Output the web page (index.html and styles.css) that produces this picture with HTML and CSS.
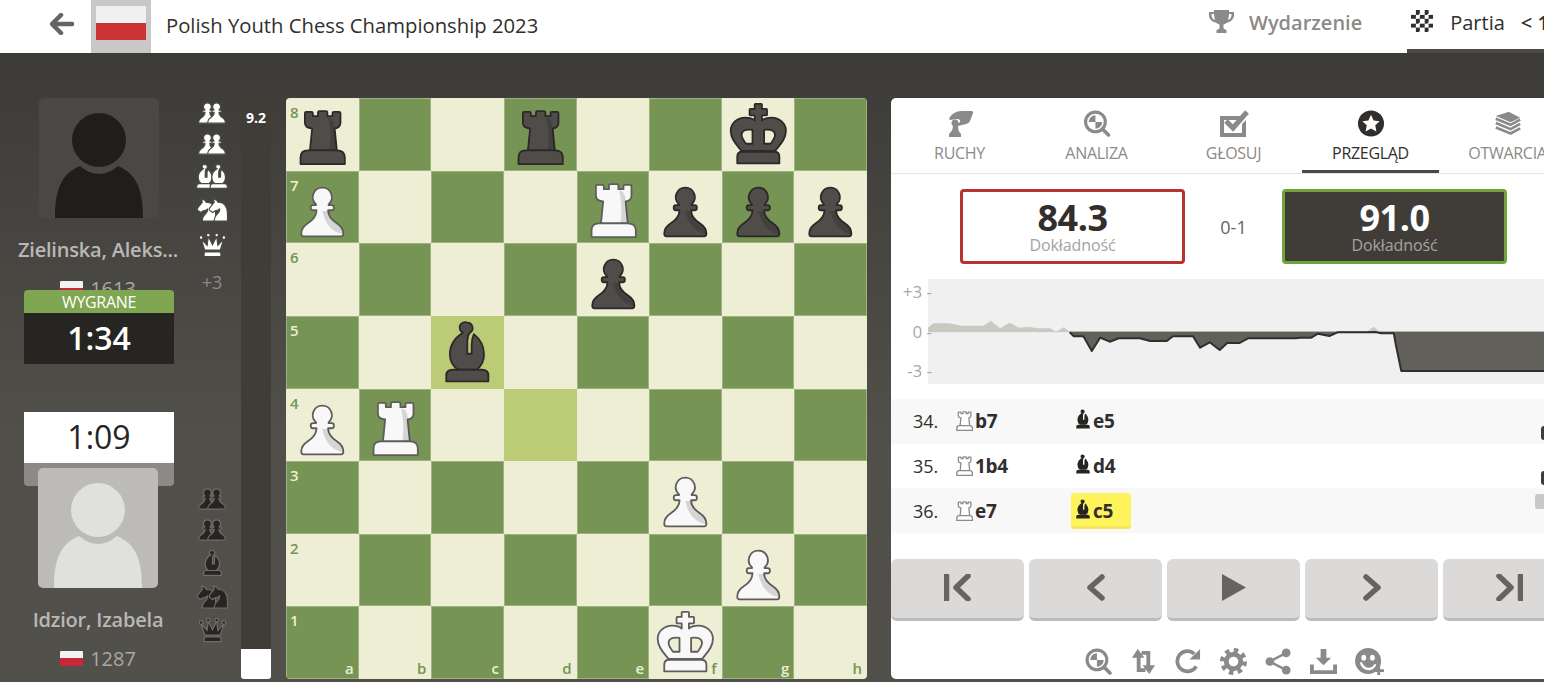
FILE: index.html
```html
<!DOCTYPE html>
<html lang="pl">
<head>
  <meta charset="UTF-8">
  <meta name="viewport" content="width=device-width, initial-scale=1.0">
  <title>Polish Youth Chess Championship 2023</title>
  <link rel="stylesheet" href="styles.css">
</head>
<body>

<!-- Shared piece shapes -->
<svg class="defs" aria-hidden="true">
  <symbol id="rook" viewBox="0 0 100 100">
    <path d="M26 21q0-2 2-2h7q2 0 2 2v4h7v-5q0-2 2-2h9q2 0 2 2v5h7v-4q0-2 2-2h7q2 0 2 2v13q0 7-8 8l3 30H33l3-30q-10-1-10-8z"/>
    <path class="shade" d="M58 27q9 0 9 15l3 30H60q3-25-2-45z"/>
    <path d="M30 72h40q11 0 11 10v9H20v-9q0-10 10-10z"/>
  </symbol>
  <symbol id="pawn" viewBox="0 0 100 100">
    <path d="M50 23a13 13 0 0 1 9 22.500q-1 1 0 1.500h4q3 0 3 3.500t-3 3.500h-5q0 10 12 18q9 6 9 14 0 4-3 4H24q-3 0-3-4 0-8 9-14q12-8 12-18h-5q-3 0-3-3.500t3-3.500h4q1-.5 0-1.500A13 13 0 0 1 50 23z"/>
    <path class="shade" d="M50 55h8q0 10 12 18q9 6 9 14-14-2-22-14-5-8-7-18z"/>
  </symbol>
  <symbol id="bishop" viewBox="0 0 100 100">
    <path d="M50 9a7.500 7.500 0 0 1 3.500 14Q50 27 50 34V52h6V40q0-8 3-15q14 11 14 28q0 13-10 21H37Q26 66 26 53q0-19 18-30a7.500 7.500 0 0 1 6-14z"/>
    <path d="M30 74h40q9 0 9 8v8H21v-8q0-8 9-8z"/>
  </symbol>
  <symbol id="king" viewBox="0 0 100 100">
    <path fill-rule="evenodd" d="M45 9q0-1 1-1h8q1 0 1 1v6h6q1 0 1 1v7q0 1-1 1h-6v7q4-4 13-4c11 0 20 8 20 18c0 12-9 20-15 28H27C21 65 12 57 12 45c0-10 9-18 20-18q9 0 13 4v-7h-6q-1 0-1-1v-7q0-1 1-1h6zM42 44v19H33q-6-8-6-12 0-9 15-7zM58 44v19h9q6-8 6-12 0-9-15-7z"/>
    <path d="M28 74h44q7 0 7 7v9H21v-9q0-7 7-7z"/>
  </symbol>
  <symbol id="knight" viewBox="0 0 100 100">
    <path d="M45 15l6 8c20-2 33 14 33 40v27H36c0-14 5-20 14-28 4-4 7-9 6-16-6 6-12 7-17 7l-8 6-11-7c-3-3-2-6 0-10l16-20-2-12z"/>
  </symbol>
  <symbol id="queen" viewBox="0 0 100 100">
    <path d="M24 68L12 30l20 22 4-30 14 28 14-28 4 30 20-22-12 38z"/>
    <circle cx="12" cy="26" r="6"/><circle cx="36" cy="18" r="6"/><circle cx="64" cy="18" r="6"/><circle cx="88" cy="26" r="6"/>
    <path d="M27 74h46q5 0 5 6v10H22V80q0-6 5-6z"/>
  </symbol>
  <symbol id="avatar" viewBox="0 0 120 120">
    <circle cx="60" cy="42" r="27"/>
    <path d="M16 120C16 92 22 76 41 68Q60 84 79 68C98 76 104 92 104 120z"/>
  </symbol>
  <symbol id="pie-lens" viewBox="0 0 26 26">
    <circle cx="11.500" cy="11.500" r="9.500" fill="none" stroke="currentColor" stroke-width="3"/>
    <path d="M11.500 11.500V5a6.500 6.500 0 0 0-6.500 6.500zM11.500 11.500V18a6.500 6.500 0 0 0 6.500-6.500z" fill="currentColor"/>
    <path d="M18.500 18.500L24 24" stroke="currentColor" stroke-width="3.500" stroke-linecap="round"/>
  </symbol>
</svg>

<header class="topbar">
  <svg class="back-arrow" viewBox="0 0 24 22"><path d="M2 11L11 2M2 11l9 9M3 11h19" fill="none" stroke="currentColor" stroke-width="4.500" stroke-linecap="round" stroke-linejoin="round"/></svg>
  <div class="event-flag"><div class="event-flag-inner"></div></div>
  <div class="event-title">Polish Youth Chess Championship 2023</div>
  <nav class="topnav">
    <div class="topnav-item">
      <svg class="trophy" viewBox="0 0 25 24"><path d="M5 1h15v2h5v3c0 4-3 7-7 7.500-1 1-2 1.500-3.500 2V19c0 1 2.500 1.500 3 2.500V24H7.500v-2.500c.5-1 3-1.500 3-2.500v-3.500c-1.500-.5-2.500-1-3.500-2C3 13 0 10 0 6V3h5zM2.500 5v1c0 2.500 1.500 4.500 3.500 5-.5-2-1-4-1-6zM22.500 5H20c0 2-.5 4-1 6 2-.5 3.500-2.500 3.500-5z" fill="currentColor"/></svg>
      <span>Wydarzenie</span>
    </div>
    <div class="topnav-item topnav-active">
      <div class="checker"></div>
      <span>Partia</span>
      <span class="game-pager">&lt; 1</span>
    </div>
  </nav>
</header>

<main class="game">
  <!-- Players and clocks -->
  <section class="players">
    <div class="player">
      <div class="avatar avatar-dark"><svg><use href="#avatar"/></svg></div>
      <div class="player-name">Zielinska, Aleks...</div>
      <div class="player-rating"><span class="flag-small"></span>1613</div>
    </div>

    <div class="clock clock-top">
      <div class="clock-result">WYGRANE</div>
      <div class="clock-time">1:34</div>
    </div>
    <div class="clock clock-bottom">
      <div class="clock-time">1:09</div>
      <div class="clock-tab"></div>
    </div>

    <div class="player player-bottom">
      <div class="avatar avatar-light"><svg><use href="#avatar"/></svg></div>
      <div class="player-name">Idzior, Izabela</div>
      <div class="player-rating"><span class="flag-small"></span>1287</div>
    </div>
  </section>

  <!-- Captured pieces -->
  <section class="captured">
    <div class="captured-group cap-white">
      <svg class="cap cap-pawns" viewBox="19 21 92 71"><use href="#pawn" width="100" height="100"/><use href="#pawn" x="30" width="100" height="100"/></svg>
      <svg class="cap cap-pawns" viewBox="19 21 92 71"><use href="#pawn" width="100" height="100"/><use href="#pawn" x="30" width="100" height="100"/></svg>
      <svg class="cap cap-bishops" viewBox="19 7 108 85"><use href="#bishop" width="100" height="100"/><use href="#bishop" x="46" width="100" height="100"/></svg>
      <svg class="cap cap-knights" viewBox="17 8 112 84"><use href="#knight" width="100" height="100"/><use href="#knight" x="43" width="100" height="100"/></svg>
      <svg class="cap cap-queen" viewBox="5 11 90 80"><use href="#queen" width="100" height="100"/></svg>
      <div class="cap-score">+3</div>
    </div>
    <div class="captured-group cap-black">
      <svg class="cap cap-pawns" viewBox="19 21 92 71"><use href="#pawn" width="100" height="100"/><use href="#pawn" x="30" width="100" height="100"/></svg>
      <svg class="cap cap-pawns" viewBox="19 21 92 71"><use href="#pawn" width="100" height="100"/><use href="#pawn" x="30" width="100" height="100"/></svg>
      <svg class="cap cap-bishop" viewBox="19 7 62 85"><use href="#bishop" width="100" height="100"/></svg>
      <svg class="cap cap-knights" viewBox="17 8 112 84"><use href="#knight" width="100" height="100"/><use href="#knight" x="43" width="100" height="100"/></svg>
      <svg class="cap cap-queen" viewBox="5 11 90 80"><use href="#queen" width="100" height="100"/></svg>
    </div>
  </section>

  <div class="eval-bar">
    <div class="eval-score">9.2</div>
    <div class="eval-white"></div>
  </div>

  <!-- Board -->
  <section class="board">
    <div class="sq l"><span class="rank">8</span><svg class="piece black"><use href="#rook"/></svg></div>
    <div class="sq d"></div>
    <div class="sq l"></div>
    <div class="sq d"><svg class="piece black"><use href="#rook"/></svg></div>
    <div class="sq l"></div>
    <div class="sq d"></div>
    <div class="sq l"><svg class="piece black"><use href="#king"/></svg></div>
    <div class="sq d"></div>

    <div class="sq d"><span class="rank">7</span><svg class="piece white"><use href="#pawn"/></svg></div>
    <div class="sq l"></div>
    <div class="sq d"></div>
    <div class="sq l"></div>
    <div class="sq d"><svg class="piece white"><use href="#rook"/></svg></div>
    <div class="sq l"><svg class="piece black"><use href="#pawn"/></svg></div>
    <div class="sq d"><svg class="piece black"><use href="#pawn"/></svg></div>
    <div class="sq l"><svg class="piece black"><use href="#pawn"/></svg></div>

    <div class="sq l"><span class="rank">6</span></div>
    <div class="sq d"></div>
    <div class="sq l"></div>
    <div class="sq d"></div>
    <div class="sq l"><svg class="piece black"><use href="#pawn"/></svg></div>
    <div class="sq d"></div>
    <div class="sq l"></div>
    <div class="sq d"></div>

    <div class="sq d"><span class="rank">5</span></div>
    <div class="sq l"></div>
    <div class="sq hl"><svg class="piece black"><use href="#bishop"/></svg></div>
    <div class="sq l"></div>
    <div class="sq d"></div>
    <div class="sq l"></div>
    <div class="sq d"></div>
    <div class="sq l"></div>

    <div class="sq l"><span class="rank">4</span><svg class="piece white"><use href="#pawn"/></svg></div>
    <div class="sq d"><svg class="piece white"><use href="#rook"/></svg></div>
    <div class="sq l"></div>
    <div class="sq hl"></div>
    <div class="sq l"></div>
    <div class="sq d"></div>
    <div class="sq l"></div>
    <div class="sq d"></div>

    <div class="sq d"><span class="rank">3</span></div>
    <div class="sq l"></div>
    <div class="sq d"></div>
    <div class="sq l"></div>
    <div class="sq d"></div>
    <div class="sq l"><svg class="piece white"><use href="#pawn"/></svg></div>
    <div class="sq d"></div>
    <div class="sq l"></div>

    <div class="sq l"><span class="rank">2</span></div>
    <div class="sq d"></div>
    <div class="sq l"></div>
    <div class="sq d"></div>
    <div class="sq l"></div>
    <div class="sq d"></div>
    <div class="sq l"><svg class="piece white"><use href="#pawn"/></svg></div>
    <div class="sq d"></div>

    <div class="sq d"><span class="rank">1</span><span class="file">a</span></div>
    <div class="sq l"><span class="file">b</span></div>
    <div class="sq d"><span class="file">c</span></div>
    <div class="sq l"><span class="file">d</span></div>
    <div class="sq d"><span class="file">e</span></div>
    <div class="sq l"><span class="file">f</span><svg class="piece white"><use href="#king"/></svg></div>
    <div class="sq d"><span class="file">g</span></div>
    <div class="sq l"><span class="file">h</span></div>
  </section>

  <!-- Review panel -->
  <section class="panel">
    <div class="tabs">
      <div class="tab">
        <svg class="tab-icon" viewBox="5 4 28 27"><path d="M8 13C10 8 15 5 21 5H31c1 0 1 1 1 2l-3 8c-1 2-2 2-4 3l-8 2-2-1 4-3c1-2-1-3-3-3-3 0-5 1-7 1z" fill="currentColor"/><circle cx="14" cy="17" r="3.500" fill="currentColor"/><path d="M12 19h5c0 5 1 7 3 9v3H8v-3c2-2 4-4 4-9z" fill="currentColor"/></svg>
        <span>RUCHY</span>
      </div>
      <div class="tab">
        <svg class="tab-icon"><use href="#pie-lens"/></svg>
        <span>ANALIZA</span>
      </div>
      <div class="tab">
        <svg class="tab-icon" viewBox="0 0 30 27"><path d="M1 6h22l-3.500 4H5v13h18v-9l4-4v17H1z" fill="currentColor"/><path d="M7 11l7 7L28 2" fill="none" stroke="currentColor" stroke-width="5"/></svg>
        <span>GŁOSUJ</span>
      </div>
      <div class="tab tab-active">
        <svg class="tab-icon" viewBox="0 0 28 28"><circle cx="14" cy="14" r="13.500" fill="currentColor"/><path d="M14 5l2.700 5.800 6.300.8-4.600 4.300 1.200 6.300L14 19.100l-5.600 3.100 1.200-6.300L5 11.600l6.300-.8z" fill="#fff"/></svg>
        <span>PRZEGLĄD</span>
      </div>
      <div class="tab">
        <svg class="tab-icon" viewBox="3 3 32 31"><path d="M5 10L20 5l13 7-11 5z" fill="currentColor"/><path d="M5 13l17 7 11-6M5 18l17 7 11-6M5 23l17 7 11-6" fill="none" stroke="currentColor" stroke-width="3"/></svg>
        <span>OTWARCIA</span>
      </div>
    </div>

    <div class="scores">
      <div class="score score-white">
        <div class="score-value">84.3</div>
        <div class="score-label">Dokładność</div>
      </div>
      <div class="score-result">0-1</div>
      <div class="score score-black">
        <div class="score-value">91.0</div>
        <div class="score-label">Dokładność</div>
      </div>
    </div>

    <div class="chart">
      <div class="chart-axis">
        <div>+3 -</div>
        <div>0 -</div>
        <div>-3 -</div>
      </div>
      <svg class="chart-graph" viewBox="0 0 616 105">
        <path class="chart-up" d="M0 52.700V48.700L5.400 44.300H20L34.600 46.700H55.400L62.900 42 72.100 49.300 81.700 43.700 90.800 48.700 101.300 48 109.600 49.300H122.100L128.300 52.700 135.800 48.300 141.700 52.700z"/>
        <path class="chart-up" d="M438.800 52.700L445.800 47.700 451.300 52.700z"/>
        <path class="chart-zero" d="M0 52.700H616"/>
        <path class="chart-down" d="M141.700 52.700L145.800 57.300H155.400L163.800 72 172.100 58.700 181.700 62.700 190.800 59.300H211.700L222.100 62H238.800L245 57.300H265L272.100 68.700 281.700 63.300 291.700 71 299.200 64H311.700L320 59.300H367.900L372 58.700H383.300L390 54.700 401.300 57 409.600 53.300H438.800L447 53 453.300 54.300H465.800L467.900 66 473.300 92H616V52.700z"/>
        <path class="chart-line" d="M141.700 53.300L145.800 57.300H155.400L163.800 72 172.100 58.700 181.700 62.700 190.800 59.300H211.700L222.100 62H238.800L245 57.300H265L272.100 68.700 281.700 63.300 291.700 71 299.200 64H311.700L320 59.300H367.900L372 58.700H383.300L390 54.700 401.300 57 409.600 53.300H438.800L447 53 453.300 54.300H465.800L467.900 66 473.300 92H616"/>
      </svg>
    </div>

    <div class="moves">
      <div class="move-row">
        <div class="move-num">34.</div>
        <div class="move move-white"><svg class="fig fig-rook" viewBox="18 15 64 78"><use href="#rook" width="100" height="100"/></svg>b7</div>
        <div class="move"><svg class="fig fig-bishop" viewBox="18 6 64 86"><use href="#bishop" width="100" height="100"/></svg>e5</div>
        <div class="time-mark mark-dark"></div>
      </div>
      <div class="move-row">
        <div class="move-num">35.</div>
        <div class="move move-white"><svg class="fig fig-rook" viewBox="18 15 64 78"><use href="#rook" width="100" height="100"/></svg>1b4</div>
        <div class="move"><svg class="fig fig-bishop" viewBox="18 6 64 86"><use href="#bishop" width="100" height="100"/></svg>d4</div>
        <div class="time-mark mark-dark"></div>
      </div>
      <div class="move-row">
        <div class="move-num">36.</div>
        <div class="move move-white"><svg class="fig fig-rook" viewBox="18 15 64 78"><use href="#rook" width="100" height="100"/></svg>e7</div>
        <div class="move move-current"><svg class="fig fig-bishop" viewBox="18 6 64 86"><use href="#bishop" width="100" height="100"/></svg>c5</div>
        <div class="time-mark mark-grey"></div>
      </div>
    </div>

    <div class="controls">
      <button class="control">
        <svg viewBox="0 0 27 27"><path d="M2.500 1.500v24" stroke-linecap="round"/><path d="M24 2L12 13.500 24 25"/></svg>
      </button>
      <button class="control">
        <svg viewBox="0 0 27 27"><path d="M20 3L8 13.500 20 24"/></svg>
      </button>
      <button class="control">
        <svg viewBox="0 0 27 27"><path class="solid" d="M2 0L26 13.500 2 27z"/></svg>
      </button>
      <button class="control">
        <svg viewBox="0 0 27 27"><path d="M8 3L20 13.500 8 24"/></svg>
      </button>
      <button class="control">
        <svg viewBox="0 0 27 27"><path d="M3 2L15 13.500 3 25"/><path d="M24.500 1.500v24" stroke-linecap="round"/></svg>
      </button>
    </div>

    <div class="tools">
      <svg class="tool"><use href="#pie-lens"/></svg>
      <svg class="tool" viewBox="0 0 28 28"><path d="M8 1l7 9h-4v11h5v4H7V10H2zM20 27l-7-9h4V7h-5V3h9v15h5z" fill="currentColor"/></svg>
      <svg class="tool" viewBox="0 0 28 28"><path d="M22 19a10.500 10.500 0 1 1-2-13" fill="none" stroke="currentColor" stroke-width="3.800"/><path d="M26 1v11H15z" fill="currentColor"/></svg>
      <svg class="tool" viewBox="0 0 28 28"><circle cx="14" cy="14" r="11.500" fill="none" stroke="currentColor" stroke-width="5" stroke-dasharray="4.500 4.530"/><circle cx="14" cy="14" r="7.500" fill="none" stroke="currentColor" stroke-width="5"/></svg>
      <svg class="tool" viewBox="0 0 28 28"><path d="M22 5L5 14l17 9" fill="none" stroke="currentColor" stroke-width="2.500"/><circle cx="22" cy="5" r="4.500" fill="currentColor"/><circle cx="5" cy="14" r="4.500" fill="currentColor"/><circle cx="22" cy="23" r="4.500" fill="currentColor"/></svg>
      <svg class="tool" viewBox="0 0 28 28"><path d="M11 1h6v9h5l-8 8-8-8h5z" fill="currentColor"/><path d="M0 17h4v6h20v-6h4v10H0z" fill="currentColor"/></svg>
      <svg class="tool tool-wide" viewBox="0 0 32 28"><path fill-rule="evenodd" d="M13.500 0a13.500 13.500 0 1 1 0 27 13.500 13.500 0 0 1 0-27zM9 7a2.500 3 0 1 0 0 6 2.500 3 0 0 0 0-6zM18 7a2.500 3 0 1 0 0 6 2.500 3 0 0 0 0-6zM5 15c1 5 5 8 9 8s7-3 8-6l-2-.5c-1 2-3 4-6 4s-6-3-7-6z" fill="currentColor"/><path d="M23 18h3v4h4v3h-4v3h-3v-3h-4v-3h4z" fill="currentColor"/></svg>
    </div>
  </section>
</main>

</body>
</html>
```

FILE: styles.css
```css
/* Global body styles */
* {
  box-sizing: border-box;
}

html, body {
  margin: 0;
  height: 682px;
  overflow: hidden;
}

body {
  font-family: "Open Sans", "Noto Sans", sans-serif;
  color: #312e2b;
  background: #fff;
}

.defs {
  display: none;
}

/* Top bar */
.topbar {
  display: flex;
  align-items: stretch;
  height: 53px;
  background: #fff;
}

.back-arrow {
  width: 24px;
  height: 22px;
  margin: 13px 17px 0 50px;
  color: #666463;
}

.event-flag {
  width: 60px;
  padding: 6px 5px 0;
  background: #c8c8c8;
}

.event-flag-inner {
  height: 34px;
  background: linear-gradient(#f0f0f0 50%, #cc3433 50%);
}

.event-title {
  margin-left: 15px;
  line-height: 50px;
  font-size: 20.250px;
  white-space: nowrap;
}

.topnav {
  display: flex;
  flex: none;
  width: 335px;
  margin-left: auto;
}

.topnav-item {
  display: flex;
  align-items: center;
  height: 53px;
  padding-bottom: 8px;
  font-size: 20px;
  white-space: nowrap;
  color: #8b8a88;
  font-weight: 600;
}

.topnav-item .trophy {
  width: 25px;
  height: 24px;
  margin-right: 15px;
  margin-bottom: 3px;
}

.topnav-active {
  flex: 1;
  margin-left: 45px;
  padding-left: 4px;
  padding-bottom: 4px;
  overflow: hidden;
  color: #312e2b;
  font-weight: 400;
  border-bottom: 4px solid #4b4846;
}

.checker {
  flex: none;
  width: 22px;
  height: 22px;
  margin-right: 17px;
  margin-bottom: 4px;
  background: conic-gradient(#312e2b 25%, #fff 0 50%, #312e2b 0 75%, #fff 0);
  background-size: 8.800px 8.800px;
}

.game-pager {
  margin-left: 16px;
  font-weight: 600;
}

/* Game area */
.game {
  display: flex;
  align-items: flex-start;
  height: 629px;
  padding-top: 45px;
  background: linear-gradient(#3d3b37, #504f4a 60%, #52504b);
}

.players {
  position: relative;
  display: flex;
  flex: none;
  flex-direction: column;
  justify-content: space-between;
  width: 196px;
  height: 581px;
}

.player {
  display: flex;
  flex-direction: column;
  align-items: center;
}

.player-bottom {
  margin-bottom: 6px;
}

.avatar {
  position: relative;
  z-index: 1;
  width: 120px;
  height: 120px;
  border-radius: 5px;
  overflow: hidden;
}

.avatar svg {
  display: block;
  width: 120px;
  height: 120px;
}

.avatar-dark {
  margin-left: 2px;
  background: #4a4845;
  fill: #1f1e1b;
}

.avatar-light {
  background: #bcbbb8;
  fill: #e0e0df;
}

.player-name {
  margin-top: 17px;
  line-height: 30px;
  font-size: 20px;
  font-weight: 600;
  letter-spacing: -0.2px;
  color: #b9b8b6;
  white-space: nowrap;
}

.player-rating {
  display: flex;
  align-items: center;
  gap: 7px;
  height: 30px;
  margin-top: 8px;
  font-size: 20px;
  color: #a9a8a5;
}

.flag-small {
  width: 23px;
  height: 15px;
  border-radius: 1px;
  background: linear-gradient(#f2f2f2 50%, #c8263a 50%);
}

/* Clocks overlap the player blocks */
.clock {
  position: absolute;
  left: 24px;
  z-index: 2;
  width: 150px;
  text-align: center;
}

.clock-top {
  top: 192px;
}

.clock-bottom {
  top: 314px;
  z-index: 0;
}

.clock-result {
  height: 23px;
  line-height: 24px;
  border-radius: 4px 4px 0 0;
  background: #7fa650;
  color: #fff;
  font-size: 16px;
  letter-spacing: -0.3px;
}

.clock-time {
  height: 51px;
  line-height: 50px;
  font-size: 32px;
  font-weight: 600;
  background: #262522;
  color: #fff;
}

.clock-bottom .clock-time {
  background: #fff;
  color: #262522;
  font-weight: 500;
}

.clock-tab {
  height: 23px;
  border-radius: 0 0 4px 4px;
  background: #8b8a87;
}

/* Captured pieces */
.captured {
  display: flex;
  flex: none;
  flex-direction: column;
  justify-content: space-between;
  width: 45px;
  height: 581px;
}

.captured-group {
  display: flex;
  flex-direction: column;
  align-items: center;
  width: 32px;
  --shade: none;
}

.cap-white {
  padding-top: 4px;
  gap: 9px;
  fill: #fff;
  stroke: #4b4a46;
  stroke-width: 4px;
}

.cap-white .cap-queen {
  margin-top: 2px;
}

.cap-black {
  gap: 9px;
  padding-bottom: 37px;
  fill: #262522;
  stroke: #6e6d69;
  stroke-width: 4px;
}

.cap {
  display: block;
  flex: none;
  overflow: visible;
}

.cap-pawns {
  width: 28px;
  height: 22px;
}

.cap-bishops {
  width: 32px;
  height: 25px;
}

.cap-bishop {
  width: 19px;
  height: 26px;
}

.cap-knights {
  width: 31px;
  height: 24px;
}

.cap-queen {
  width: 27px;
  height: 24px;
}

.cap-score {
  margin-top: 4px;
  font-size: 18px;
  line-height: 24px;
  color: #8b8a87;
  stroke: none;
}

/* Eval bar */
.eval-bar {
  display: flex;
  flex: none;
  flex-direction: column;
  justify-content: space-between;
  width: 30px;
  height: 581px;
  margin-right: 15px;
  border-radius: 3px;
  background: #403d39;
  overflow: hidden;
}

.eval-score {
  padding-top: 10px;
  text-align: center;
  font-size: 14px;
  font-weight: 700;
  color: #fff;
}

.eval-white {
  height: 30px;
  background: #fff;
}

/* Board */
.board {
  display: grid;
  flex: none;
  grid-template-columns: repeat(8, 1fr);
  grid-template-rows: repeat(8, 1fr);
  width: 581px;
  height: 581px;
  border-radius: 4px;
  overflow: hidden;
}

.sq {
  position: relative;
}

.l {
  background: #eeeed5;
  color: #769453;
}

.d {
  background: #769453;
  color: #eeeed5;
  box-shadow: inset 0 0 0 1px rgba(238, 238, 213, 0.35);
}

.hl {
  background: #bbcb76;
}

.rank {
  position: absolute;
  left: 4px;
  top: 5px;
  font-size: 15px;
  font-weight: 600;
  line-height: 18px;
}

.file {
  position: absolute;
  right: 5px;
  bottom: 2px;
  font-size: 15px;
  font-weight: 600;
  line-height: 18px;
}

.piece {
  position: absolute;
  inset: 0;
  width: 100%;
  height: 100%;
  stroke-width: 2.500px;
  stroke-linejoin: round;
}

.piece.black {
  fill: #4f4c4a;
  stroke: #2c2a28;
}

.piece.white {
  fill: #f8f8f8;
  stroke: #5f5d5b;
}

.shade {
  fill: var(--shade, rgba(0, 0, 0, 0.14));
  stroke: none;
}

/* Review panel */
.panel {
  flex: none;
  width: 690px;
  height: 581px;
  margin-left: 24px;
  border-radius: 5px;
  background: #fff;
  overflow: hidden;
}

.tabs {
  display: flex;
  height: 76px;
  border-bottom: 1px solid #e6e6e6;
}

.tab {
  display: flex;
  flex: none;
  flex-direction: column;
  align-items: center;
  width: 137px;
  height: 75px;
  padding-top: 12px;
  font-size: 16px;
  line-height: 20px;
  letter-spacing: -0.3px;
  color: #8b8a88;
}

.tab-icon {
  flex: none;
  width: 30px;
  height: 27px;
  margin-bottom: 6px;
}

.tab-active {
  color: #312e2b;
  border-bottom: 3px solid #4b4846;
}

/* Accuracy boxes */
.scores {
  display: flex;
  align-items: center;
  padding: 15px 0 0 69px;
}

.score {
  width: 225px;
  height: 75px;
  padding-top: 9px;
  border: 3px solid #b93232;
  border-radius: 4px;
  text-align: center;
}

.score-black {
  border-color: #6fa43d;
  background: #403d39;
  color: #fff;
}

.score-value {
  height: 34px;
  font-size: 36px;
  font-weight: 700;
  line-height: 34px;
  letter-spacing: -0.5px;
}

.score-label {
  font-size: 16px;
  line-height: 20px;
  letter-spacing: -0.1px;
  color: #a3a3a3;
}

.score-result {
  width: 97px;
  text-align: center;
  font-size: 18px;
  color: #666463;
}

/* Eval graph */
.chart {
  display: flex;
  height: 105px;
  margin-top: 15px;
}

.chart-axis {
  position: relative;
  z-index: 1;
  flex: none;
  width: 41px;
  height: 105px;
  margin-top: -7px;
  margin-right: -4px;
  text-align: right;
  font-size: 17px;
  line-height: 39.500px;
  color: #a8a8a8;
}

.chart-graph {
  display: block;
  flex: none;
  width: 616px;
  height: 105px;
  background: #f0f0f0;
}

.chart-up {
  fill: #c9c8c2;
}

.chart-zero {
  fill: none;
  stroke: #c9c8c2;
  stroke-width: 1;
}

.chart-down {
  fill: #62605a;
}

.chart-line {
  fill: none;
  stroke: #312e2b;
  stroke-width: 2;
  stroke-linejoin: round;
}

/* Move list */
.moves {
  margin-top: 15px;
}

.move-row {
  position: relative;
  display: flex;
  align-items: center;
  height: 44.700px;
  font-size: 18px;
}

.move-row:nth-child(odd) {
  background: #f8f8f8;
}

.move-num {
  width: 65px;
  padding-left: 22px;
}

.move {
  display: flex;
  align-items: center;
  width: 119px;
  height: 36px;
  padding-left: 4px;
  font-weight: 700;
  font-size: 19px;
  letter-spacing: -0.3px;
}

.move-white {
  width: 115px;
  padding-left: 0;
}

.move-current {
  width: 60px;
  border-radius: 3px;
  background: #fff35b;
  border-bottom: 3px solid #f5e75a;
  padding-top: 3px;
}

.fig {
  flex: none;
  height: 20px;
  margin-right: 2px;
}

.fig-rook {
  width: 17px;
  fill: #fff;
  stroke: #8a8a8a;
  stroke-width: 5px;
  --shade: none;
}

.fig-bishop {
  width: 16px;
  fill: #262522;
  margin-bottom: 4px;
}

.time-mark {
  position: absolute;
  border-radius: 3px;
}

.mark-dark {
  left: 650px;
  top: 27px;
  width: 20px;
  height: 14px;
  background: #3f3d39;
}

.mark-grey {
  left: 644px;
  top: 6px;
  width: 30px;
  height: 15px;
  background: #c8c8c8;
}

/* Playback buttons */
.controls {
  display: flex;
  gap: 5px;
  margin-top: 26px;
}

.control {
  display: flex;
  flex: none;
  align-items: center;
  justify-content: center;
  width: 133px;
  height: 62px;
  padding: 0 0 3px;
  border: none;
  border-bottom: 3px solid #bdbcba;
  border-radius: 6px;
  background: #dbdad8;
}

.control svg {
  width: 27px;
  height: 27px;
  fill: none;
  stroke: #666463;
  stroke-width: 5.500;
  stroke-linejoin: round;
  stroke-linecap: round;
}

.control .solid {
  fill: #666463;
  stroke: none;
}

/* Bottom tools */
.tools {
  display: flex;
  gap: 18px;
  margin-top: 27px;
  padding-left: 194px;
  color: #8b8a88;
}

.tool {
  flex: none;
  width: 27px;
  height: 27px;
}

.tool-wide {
  width: 31px;
}
```
